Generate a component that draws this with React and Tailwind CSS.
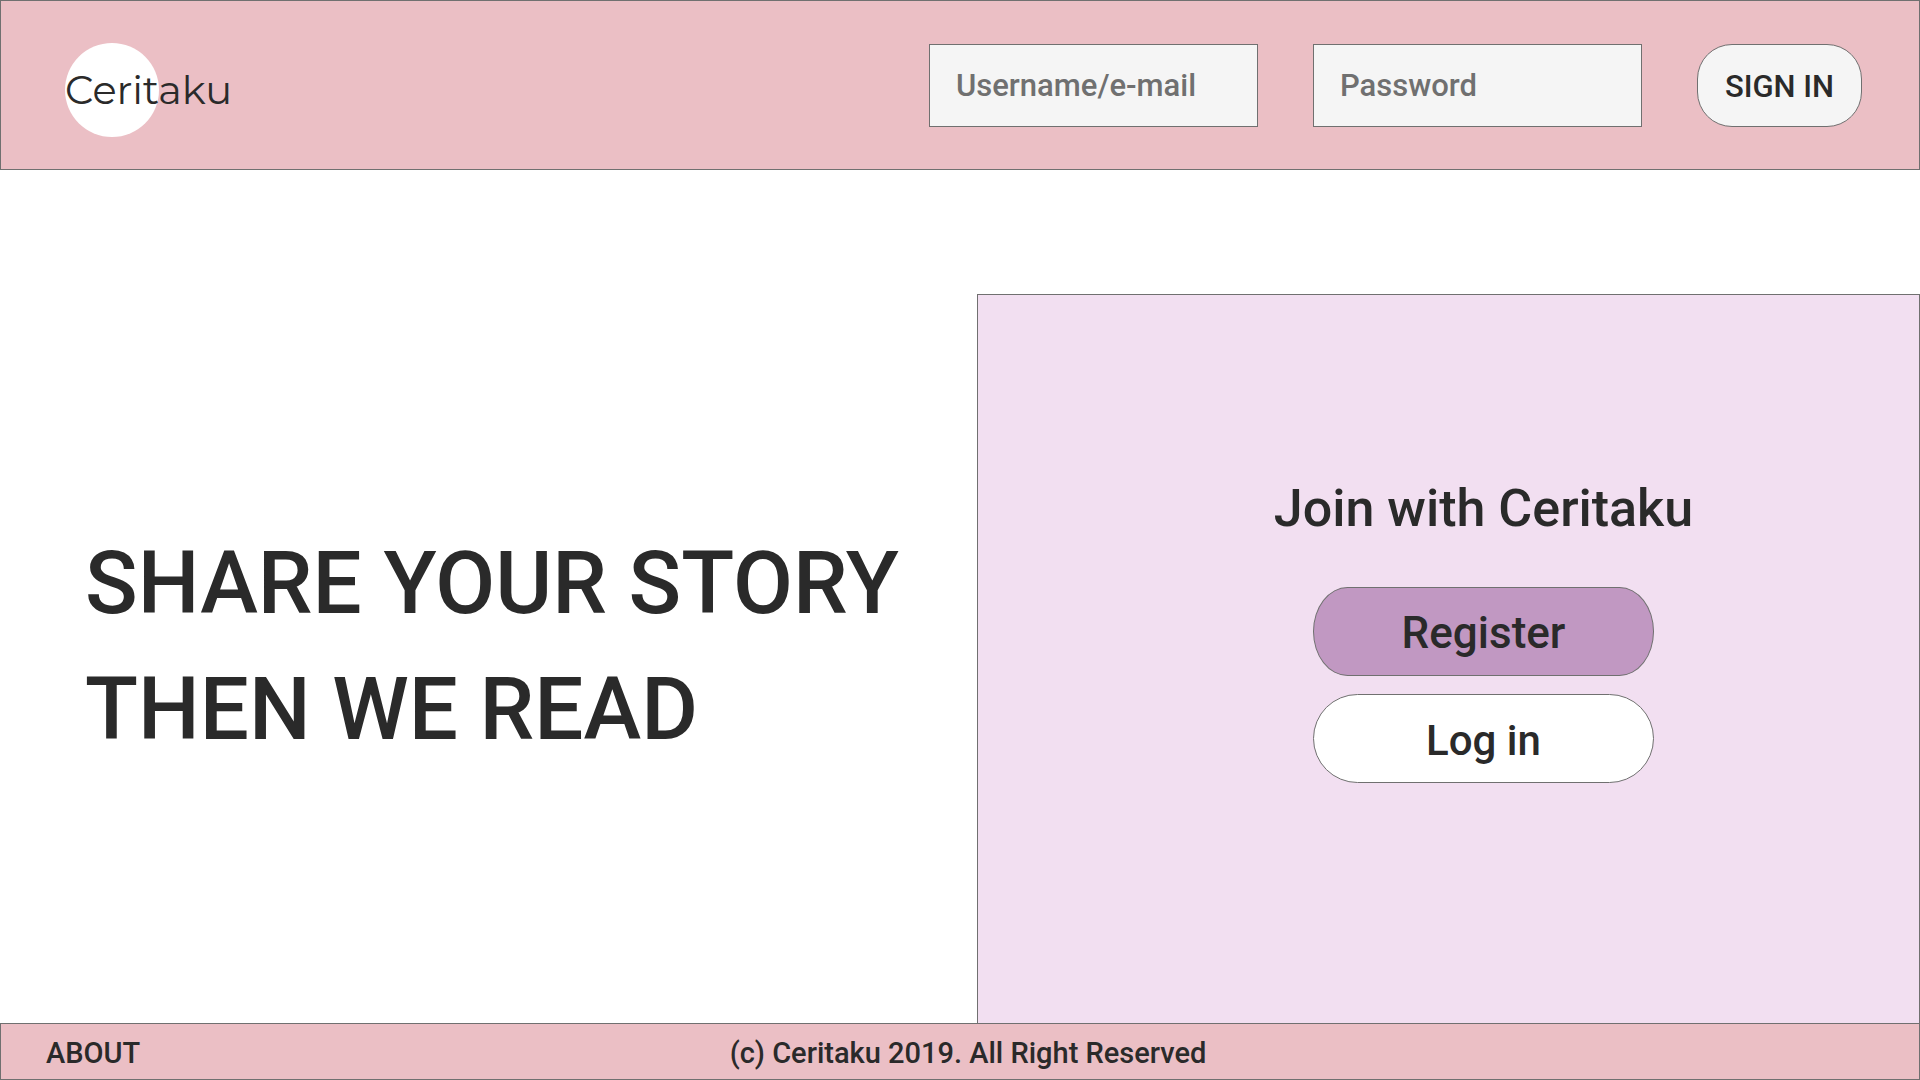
const field = "h-[83px] w-[329px] min-w-0 border border-[#707070] bg-[#f5f5f5] px-[26px] text-[31px] font-medium text-[#2a2a2a] outline-none placeholder:text-[#707070]";

function Header() {
  return (
    <header className="flex h-[170px] shrink-0 items-center justify-between border border-[#707070] bg-[#ebbfc5] pr-[57px] pl-16">
      <a href="#home" className="relative mt-2.5 flex h-[94px] items-center">
        <span className="absolute left-0 top-0 size-[94px] rounded-full bg-white" />
        <span className="relative font-[Montserrat,Inter,sans-serif] text-[40px] font-normal">Ceritaku</span>
      </a>
      <form className="flex items-center gap-[55px]" onSubmit={(e) => e.preventDefault()}>
        <input aria-label="Username or e-mail" type="text" placeholder="Username/e-mail" className={field} />
        <input aria-label="Password" type="password" placeholder="Password" className={field} />
        <button className="h-[83px] w-[165px] rounded-[35px] border border-[#707070] bg-[#f5f5f5] pt-1 text-[31px] font-medium">SIGN IN</button>
      </form>
    </header>
  );
}

export default function App() {
  return (
    <div className="flex min-h-screen flex-col bg-white font-[Roboto,sans-serif] font-medium text-[#2a2a2a]">
      <Header />
      <main className="grid grow grid-cols-[977fr_943fr]">
        <section className="flex items-center pl-[85px] pt-[98px]">
          <h1 className="text-[87px] leading-[126px] font-medium">SHARE YOUR STORY<br />THEN WE READ</h1>
        </section>
        <section className="mt-[124px] flex flex-col items-center border border-b-0 border-[#707070] bg-[#f2dff1] pt-[180px] pl-[70px]">
          <h2 className="text-[52px] leading-[68px] font-medium">Join with Ceritaku</h2>
          <button className="mt-11 h-[89px] w-[341px] rounded-[35px/45px] border border-[#707070] bg-[#c198c2] pt-0.5 text-[44px]">Register</button>
          <button className="mt-[18px] h-[89px] w-[341px] rounded-[45px] border border-[#707070] bg-white pt-1 text-[42px]">Log in</button>
        </section>
      </main>
      <footer className="grid h-[57px] shrink-0 grid-cols-3 items-center border border-[#707070] bg-[#ebbfc5] pt-1 text-[29px]">
        <a href="#about" className="pl-[45px]">ABOUT</a>
        <p className="pl-4 text-center">(c) Ceritaku 2019. All Right Reserved</p>
      </footer>
    </div>
  );
}
